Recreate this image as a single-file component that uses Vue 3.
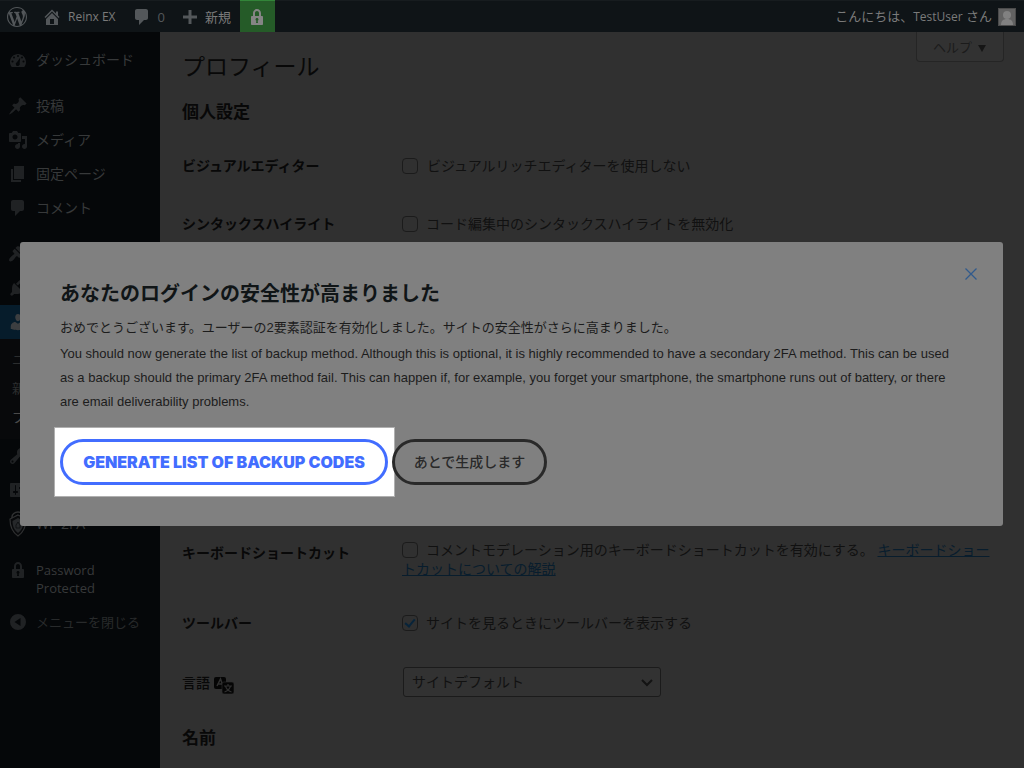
<script setup>
import { ref } from 'vue'

const icons = {
  wordpress: 'M20 10c0-5.51-4.49-10-10-10C4.48 0 0 4.49 0 10c0 5.52 4.48 10 10 10 5.51 0 10-4.48 10-10zM7.78 15.37L4.37 6.22c.55-.02 1.17-.08 1.17-.08.5-.06.44-1.13-.06-1.11 0 0-1.45.11-2.37.11-.18 0-.37 0-.58-.01C4.12 2.69 6.87 1.11 10 1.11c2.33 0 4.45.87 6.05 2.34-.68-.11-1.65.39-1.65 1.58 0 .74.45 1.36.9 2.1.35.61.55 1.36.55 2.46 0 1.49-1.4 5-1.4 5l-3.03-8.37c.54-.02.82-.17.82-.17.5-.05.44-1.25-.06-1.22 0 0-1.44.12-2.38.12-.87 0-2.33-.12-2.33-.12-.5-.03-.56 1.2-.06 1.22l.92.08 1.26 3.41zM17.41 10c.24-.64.74-1.87.43-4.25.7 1.29 1.05 2.71 1.05 4.25 0 3.29-1.73 6.24-4.4 7.78.97-2.59 1.94-5.2 2.92-7.78zM6.1 18.09C3.12 16.65 1.11 13.53 1.11 10c0-1.3.23-2.48.72-3.59C3.25 10.3 4.67 14.2 6.1 18.09zm4.03-6.63l2.58 6.98c-.86.29-1.76.45-2.71.45-.79 0-1.57-.11-2.29-.33.81-2.38 1.62-4.74 2.42-7.1z',
  home: 'M16 8.5l1.53 1.53-1.06 1.06L10 4.6l-6.47 6.49-1.06-1.06L10 2.5l4 4v-2h2v4zm-6-2.46l6 5.99V18H4v-5.97zM12 17v-5H8v5h4z',
  comment: 'M5 2h9c1.1 0 2 .9 2 2v7c0 1.1-.9 2-2 2h-2l-5 5v-5H5c-1.1 0-2-.9-2-2V4c0-1.1.9-2 2-2z',
  plus: 'M17 8.5v3h-5.5V17h-3v-5.5H3v-3h5.500V3h3v5.500z',
  lock: 'M14 9h1c.55 0 1 .45 1 1v7c0 .55-.45 1-1 1H5c-.55 0-1-.45-1-1v-7c0-.55.45-1 1-1h1V6c0-2.21 1.79-4 4-4s4 1.79 4 4v3zm-2 0V6c0-1.1-.9-2-2-2s-2 .9-2 2v3h4zm-1 7l-.36-2.15c.51-.24.86-.75.86-1.35 0-.83-.67-1.5-1.5-1.5s-1.500.67-1.500 1.500c0 .6.35 1.11.86 1.35L9 16h2z',
  dashboard: 'M3.76 17h12.480c1.340-1.630 1.760-3.330 1.760-5 0-4.420-3.580-8-8-8s-8 3.580-8 8c0 1.670.42 3.370 1.760 5zM10 5a1 1 0 1 1 0 2 1 1 0 0 1 0-2zM6 6.500a1 1 0 1 1 0 2 1 1 0 0 1 0-2zM14 6.500a1 1 0 1 1 0 2 1 1 0 0 1 0-2zM4.500 10.500a1 1 0 1 1 0 2 1 1 0 0 1 0-2zM15.500 10.500a1 1 0 1 1 0 2 1 1 0 0 1 0-2zM12.300 7.500l-.7 5.600a2 2 0 1 1-2.700-.9z',
  post: 'M10.44 3.02l1.82-1.82 6.36 6.35-1.83 1.82c-1.05-.68-2.48-.57-3.41.36l-.75.75c-.92.93-1.04 2.35-.35 3.41l-1.83 1.82-2.41-2.41-2.8 2.79c-.42.42-3.38 2.71-3.8 2.29s1.86-3.39 2.28-3.81l2.79-2.79L4.1 9.36l1.83-1.82c1.05.69 2.48.57 3.4-.36l.75-.75c.93-.92 1.05-2.35.36-3.41z',
  media: 'M13 11V4c0-.55-.45-1-1-1h-1.67L9 1H5L3.67 3H2c-.55 0-1 .45-1 1v7c0 .55.45 1 1 1h10c.55 0 1-.45 1-1zM7 4.5c1.38 0 2.5 1.12 2.5 2.5S8.38 9.5 7 9.5 4.5 8.38 4.5 7 5.62 4.5 7 4.5zM14 6h5v10.5c0 1.38-1.12 2.5-2.5 2.5S14 17.88 14 16.5s1.12-2.5 2.5-2.5c.17 0 .34.02.5.05V9h-3V6zm-4 8.05V13h2v3.5c0 1.38-1.12 2.5-2.5 2.5S7 17.88 7 16.5 8.12 14 9.5 14c.17 0 .34.02.5.05z',
  page: 'M6 15V2h10v13H6zm-1 1h8v2H3V5h2v11z',
  appearance: 'M14.48 11.06L7.41 3.99l1.5-1.5c.5-.56 2.3-.47 3.51.32 1.21.8 1.43 1.28 2.91 2.1 1.18.64 2.45 1.26 4.45.85zm-.71.71L6.7 4.7 4.93 6.47c-.39.39-.39 1.02 0 1.41l1.06 1.06c.39.39.39 1.03 0 1.42-.6.6-1.43 1.11-2.21 1.69-.35.26-.7.53-1.01.84C1.43 14.23.4 16.08 1.4 17.07c.99 1 2.84-.03 4.18-1.36.31-.31.58-.66.85-1.02.57-.78 1.08-1.61 1.69-2.21.39-.39 1.02-.39 1.41 0l1.06 1.06c.39.39 1.02.39 1.41 0z',
  plugins: 'M13.11 4.36L9.87 7.6 8 5.73l3.24-3.24c.35-.34 1.05-.2 1.56.32.52.51.66 1.21.31 1.55zm-8 1.77l.91-1.12 9.01 9.01-1.19.84c-.71.71-2.63 1.16-3.82 1.16H6.14L4.9 17.26c-.59.59-1.54.59-2.12 0-.59-.58-.59-1.53 0-2.12l1.24-1.24v-3.88c0-1.13.4-3.19 1.09-3.89zm7.26 3.97l3.24-3.24c.34-.35 1.04-.21 1.55.31.52.51.66 1.21.31 1.55l-3.24 3.25z',
  users: 'M10 9.25c-2.27 0-2.73-3.44-2.73-3.44C7 4.02 7.82 2 9.97 2c2.16 0 2.98 2.02 2.71 3.81 0 0-.41 3.44-2.68 3.44zm0 2.57L12.72 10c2.39 0 4.52 2.33 4.52 4.53v2.49s-3.65 1.13-7.24 1.13c-3.65 0-7.24-1.13-7.24-1.13v-2.49c0-2.25 1.94-4.48 4.47-4.48z',
  tools: 'M16.68 9.77c-1.34 1.34-3.3 1.67-4.95.99l-5.41 6.52c-.99.99-2.59.99-3.58 0s-.99-2.59 0-3.57l6.52-5.42c-.68-1.65-.35-3.61.99-4.95 1.28-1.28 3.12-1.62 4.72-1.06l-2.89 2.89 2.82 2.82 2.86-2.87c.53 1.58.18 3.39-1.08 4.65zM3.81 16.21c.4.39 1.04.39 1.43 0 .4-.4.4-1.04 0-1.43-.39-.4-1.03-.4-1.43 0-.39.39-.39 1.03 0 1.43z',
  settings: 'M18 16V4c0-.55-.45-1-1-1H3c-.55 0-1 .45-1 1v12c0 .55.45 1 1 1h14c.55 0 1-.45 1-1zM8 11h1c.55 0 1 .45 1 1s-.45 1-1 1H8v1.5c0 .28-.22.5-.5.5s-.5-.22-.5-.5V13H6c-.55 0-1-.45-1-1s.45-1 1-1h1V5.5c0-.28.22-.5.5-.5s.5.22.5.5V11zm5-2h-1c-.55 0-1-.45-1-1s.45-1 1-1h1V5.5c0-.28.22-.5.5-.5s.5.22.5.5V7h1c.55 0 1 .45 1 1s-.45 1-1 1h-1v5.5c0 .28-.22.5-.5.5s-.5-.22-.5-.5V9z',
  collapse: 'M10 2a8 8 0 1 0 0 16 8 8 0 0 0 0-16zM12.500 6v8L6.500 10z',
}

const menu = [
  { icon: 'dashboard', label: 'ダッシュボード' },
  { icon: 'post', label: '投稿', gap: true },
  { icon: 'media', label: 'メディア' },
  { icon: 'page', label: '固定ページ' },
  { icon: 'comment', label: 'コメント' },
  { icon: 'appearance', gap: true },
  { icon: 'plugins' },
  { icon: 'users', current: true, children: ['ユーザー一覧', '新規追加', 'プロフィール'] },
  { icon: 'tools' },
  { icon: 'settings' },
  { icon: 'shield', label: 'WP 2FA' },
  { icon: 'lock', label: 'Password Protected', latin: true, gap: true },
]

const visual = ref(false)
const syntax = ref(false)
const shortcuts = ref(false)
const toolbar = ref(true)
const open = ref(true)
</script>

<template>
  <div class="admin">
    <header class="bar">
      <a href="#" class="logo" aria-label="WordPress"><svg class="ico" viewBox="0 0 20 20"><path :d="icons.wordpress" /></svg></a>
      <a href="#" class="site"><svg class="ico" viewBox="0 0 20 20"><path :d="icons.home" /></svg><span class="small">Reinx EX</span></a>
      <a href="#" class="count"><svg class="ico" viewBox="0 0 20 20"><path :d="icons.comment" /></svg>0</a>
      <a href="#" class="new"><svg class="ico" viewBox="0 0 20 20"><path :d="icons.plus" /></svg>新規</a>
      <a href="#" class="protect" aria-label="Password Protected"><svg class="ico" viewBox="0 0 20 20"><path fill-rule="evenodd" :d="icons.lock" /></svg></a>
      <a href="#" class="account"><span>こんにちは、<span class="small">TestUser</span> さん</span>
        <svg class="avatar" viewBox="0 0 18 18"><rect width="18" height="18" fill="#4b4b4b" /><rect x="1" y="1" width="16" height="16" fill="#626262" /><circle cx="9" cy="7" r="4" fill="#818181" /><path d="M3 17c0-4 2-6 6-6s6 2 6 6z" fill="#818181" /></svg>
      </a>
    </header>

    <div class="body">
      <nav class="side">
        <div v-for="m in menu" :key="m.icon" :class="{ gap: m.gap }">
          <a href="#" class="item" :class="{ current: m.current }">
            <svg v-if="m.icon === 'shield'" class="ico shield" viewBox="0 0 20 26">
              <path d="M4 9V6a6 5 0 0 1 12 0v3" fill="none" stroke="#303132" stroke-width="1.500" />
              <path d="M10 4l8 4c0 8-2 13-8 17C4 21 2 16 2 8z" fill="#08090b" stroke="#303132" stroke-width="1.200" />
              <path d="M10 7l5.500 3c0 5-1.500 9-5.500 12-4-3-5.500-7-5.500-12z" fill="#26282a" />
              <path d="M8 17v-3l2-3 2 3v3z" fill="none" stroke="#101214" />
            </svg>
            <svg v-else class="ico" viewBox="0 0 20 20"><path fill-rule="evenodd" :d="icons[m.icon]" /></svg>
            <span v-if="m.label" :class="{ latin: m.latin }">{{ m.label }}</span>
          </a>
          <ul v-if="m.children" class="sub">
            <li v-for="(c, i) in m.children" :key="c"><a href="#" :class="{ on: i === 2 }">{{ c }}</a></li>
          </ul>
        </div>
        <button type="button" class="item collapse">
          <svg class="ico" viewBox="0 0 20 20"><path fill-rule="evenodd" :d="icons.collapse" /></svg>
          <span>メニューを閉じる</span>
        </button>
      </nav>

      <main class="content">
        <button type="button" class="help">ヘルプ <svg viewBox="0 0 9 8"><path d="M0 0h9L4.500 8z" /></svg></button>
        <h1>プロフィール</h1>
        <h2>個人設定</h2>
        <div class="form">
          <div class="row">
            <div class="name">ビジュアルエディター</div>
            <div class="field first"><label><input v-model="visual" type="checkbox">ビジュアルリッチエディターを使用しない</label></div>
          </div>
          <div class="row">
            <div class="name">シンタックスハイライト</div>
            <div class="field"><label><input v-model="syntax" type="checkbox">コード編集中のシンタックスハイライトを無効化</label></div>
          </div>
          <div class="schemes"></div>
          <div class="row">
            <div class="name">キーボードショートカット</div>
            <div class="field keys"><label><input v-model="shortcuts" type="checkbox">コメントモデレーション用のキーボードショートカットを有効にする。</label> <a href="#">キーボードショートカットについての解説</a></div>
          </div>
          <div class="row">
            <div class="name">ツールバー</div>
            <div class="field"><label><input v-model="toolbar" type="checkbox">サイトを見るときにツールバーを表示する</label></div>
          </div>
          <div class="row lang">
            <label class="name" for="locale">言語
              <svg class="trans" viewBox="0 0 20 17">
                <rect width="12" height="12" rx="2" fill="#050505" />
                <path d="M3 9l3.500-7L9 9M4 7h4" fill="none" stroke="#303030" stroke-width="1.500" />
                <rect x="8" y="5" width="12" height="12" rx="2" fill="#050505" stroke="#303030" stroke-width=".6" />
                <path d="M10 9h8M14 7v2M16.500 9c-.8 3-3 5-6 6M11.500 9c.8 3 3 5 6 6" fill="none" stroke="#303030" stroke-width="1.200" />
              </svg>
            </label>
            <div class="field pick">
              <select id="locale"><option>サイトデフォルト</option></select>
              <svg class="chev" viewBox="0 0 12 8"><path d="M1 1l5 5 5-5" fill="none" stroke="#131313" stroke-width="2" /></svg>
            </div>
          </div>
        </div>
        <h2>名前</h2>
      </main>
    </div>

    <section v-if="open" class="modal" role="dialog" aria-modal="true" aria-labelledby="modal-title">
      <button type="button" class="close" aria-label="閉じる" @click="open = false">
        <svg viewBox="0 0 12 12"><path d="M.5.5l11 11M11.500.5l-11 11" fill="none" stroke="#315a8c" stroke-width="1.300" /></svg>
      </button>
      <h3 id="modal-title">あなたのログインの安全性が高まりました</h3>
      <p class="ja">おめでとうございます。ユーザーの2要素認証を有効化しました。サイトの安全性がさらに高まりました。</p>
      <p class="en">You should now generate the list of backup method. Although this is optional, it is highly recommended to have a secondary 2FA method. This can be used as a backup should the primary 2FA method fail. This can happen if, for example, you forget your smartphone, the smartphone runs out of battery, or there are email deliverability problems.</p>
      <div class="actions">
        <div class="spot"><button type="button" class="pill primary">GENERATE LIST OF BACKUP CODES</button></div>
        <button type="button" class="pill later">あとで生成します</button>
      </div>
    </section>
  </div>
</template>

<style>
body { background: #303030; overflow: hidden; }
</style>

<style scoped>
.admin, .admin * { box-sizing: border-box; }
.admin {
  min-height: 100vh;
  display: flex;
  flex-direction: column;
  color: #111;
  font: 14px/18px "Open Sans", "Noto Sans CJK JP", sans-serif;
}
a { color: inherit; text-decoration: none; }
button { font: inherit; border: 0; background: none; padding: 0; color: inherit; text-align: left; cursor: pointer; }
h1, h2, h3, p, ul { margin: 0; padding: 0; }
.ico { width: 20px; height: 20px; flex: none; fill: currentColor; }
.small { font-size: 12px; }
.latin { font-size: 13px; }

.bar {
  height: 32px;
  display: flex;
  align-items: stretch;
  padding: 0 8px 0 7px;
  background: #0f1417;
  border-top: 1px solid #171c1f;
  color: #7a7a7a;
  font-size: 13px;
}
.bar a { display: flex; align-items: center; white-space: nowrap; }
.bar .ico { fill: #53575a; }
.site { gap: 6px; margin-left: 15px; }
.count { gap: 6px; margin-left: 16px; color: #53575a; }
.new { gap: 5px; margin-left: 15px; }
.protect { width: 35px; margin-left: 9px; justify-content: center; background: #255b28; box-shadow: 0 -1px #328539; }
.bar .protect .ico { fill: #858585; }
.account { gap: 6px; margin-left: auto; }
.avatar { width: 18px; height: 18px; }

.body { flex: 1; display: flex; }
.side { width: 160px; flex: none; padding-top: 11px; background: #050709; color: #37393a; }
.gap { padding-top: 12px; }
.item { display: flex; gap: 8px; padding: 8px 8px; min-height: 34px; width: 100%; }
.item .ico { color: #202224; margin: -1px 0; }
.item .ico.shield { height: 26px; margin: -4px 0; }
.item.current { background: #061c2b; }
.item.current .ico { color: #3c3e40; }
.sub { list-style: none; background: #08090b; padding: 6px 0; height: 100px; color: #2b2d2e; font-size: 13px; }
.sub li { padding: 5px 12px; height: 29px; }
.sub .on { color: #4a4a4a; }
.collapse { color: #282a2b; font-size: 13px; }

.content { position: relative; flex: 1; min-width: 0; padding: 19px 21px 0 22px; }
.help {
  position: absolute;
  top: 0;
  right: 20px;
  height: 30px;
  width: 88px;
  padding-left: 16px;
  border: 1px solid #252525;
  border-top: 0;
  border-radius: 0 0 4px 4px;
  background: #323232;
  color: #1b1b1b;
  font-size: 13px;
}
.help svg { width: 8px; height: 7px; margin-left: 3px; fill: #151515; }
h1 { font-size: 23px; line-height: 30px; font-weight: 400; color: #080808; }
h2 { font-size: 17px; line-height: 24px; font-weight: 700; color: #080808; }
h1 + h2 { margin-top: 19px; }
.form { margin: 13px 0 14px; }
.row { display: flex; }
.name { width: 220px; flex: none; padding: 20px 0; font-weight: 600; color: #080808; }
.field { flex: 1; padding: 20px 0; color: #111; }
.field input {
  position: relative;
  appearance: none;
  width: 16px;
  height: 16px;
  margin: 0 8px 0 0;
  border: 1px solid #1b1b1b;
  border-radius: 4px;
  vertical-align: -3px;
}
.first input { margin-right: 9px; }
.field input:checked::after {
  content: "";
  box-sizing: border-box;
  position: absolute;
  left: 4px;
  top: 1px;
  width: 6px;
  height: 10px;
  border: solid #08243a;
  border-width: 0 2px 2px 0;
  transform: rotate(40deg);
}
.keys { padding: 16px 0; line-height: 19px; }
.keys a { color: #081d2d; text-decoration: underline; }
.schemes { height: 271px; }
.lang .name { padding: 22px 0 0; font-weight: 500; }
.trans { width: 20px; height: 17px; vertical-align: -6px; }
.pick { position: relative; padding: 15px 1px; }
.pick select {
  display: block;
  appearance: none;
  width: 258px;
  height: 30px;
  padding: 0 8px;
  border: 1px solid #1b1b1b;
  border-radius: 3px;
  background: #323232;
  color: #111;
  font: inherit;
}
.chev { position: absolute; left: 239px; top: 27px; width: 12px; height: 8px; }

.modal {
  position: fixed;
  left: 20px;
  right: 21px;
  top: 50%;
  transform: translateY(-50%);
  padding: 40px 40px 41px;
  border-radius: 3px;
  background: #808080;
  color: #1c1c1c;
  font: 13px/24px "Liberation Sans", "Noto Sans CJK JP", sans-serif;
}
.close { position: absolute; right: 26px; top: 26px; width: 12px; height: 12px; }
.close svg { display: block; width: 12px; height: 12px; }
h3 { font-size: 20px; line-height: 24px; font-weight: 700; color: #101517; }
.ja { margin-top: 10px; }
.en { margin-top: 2px; }
.actions { display: flex; gap: 4px; margin-top: 25px; }
.spot { position: relative; }
.spot::before {
  content: "";
  position: absolute;
  inset: -12px -7px -12px -6px;
  border: 1px solid #b0b0b0;
  background: #fff;
}
.pill { position: relative; height: 46px; padding: 0 17px; border: 3px solid #292929; border-radius: 23px; white-space: nowrap; text-align: center; }
.primary { min-width: 328px; border-color: #426dff; color: #426dff; font: 900 16px/20px Inter, sans-serif; }
.later { min-width: 155px; color: #292929; font-size: 14px; font-weight: 500; }
</style>
